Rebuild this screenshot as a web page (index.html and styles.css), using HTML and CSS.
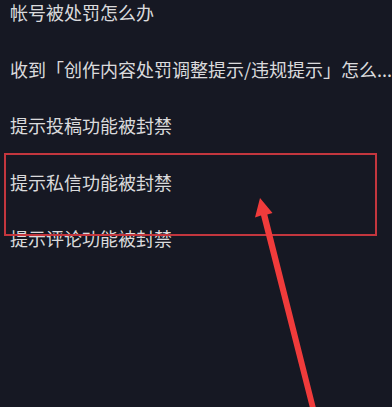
FILE: index.html
```html
<!DOCTYPE html>
<html lang="zh-CN">
<head>
<meta charset="utf-8">
<title>帐号被处罚</title>
<link rel="stylesheet" href="styles.css">
</head>
<body>
<ul class="list">
  <li class="item">帐号被处罚怎么办</li>
  <li class="item">收到「创作内容处罚调整提示/违规提示」怎么...</li>
  <li class="item">提示投稿功能被封禁</li>
  <li class="item">提示私信功能被封禁</li>
  <li class="item">提示评论功能被封禁</li>
</ul>
<div class="highlight"></div>
<svg class="arrow" width="392" height="407" viewBox="0 0 392 407" xmlns="http://www.w3.org/2000/svg">
  <polygon points="260,198 272.5,213 267.3,214.5 319,420 313,420 261,215.5 255,217.5" fill="#f03b3b"/>
</svg>
</body>
</html>
```

FILE: styles.css
```css
html, body {
  margin: 0;
  padding: 0;
}
body {
  width: 392px;
  height: 407px;
  overflow: hidden;
  background: #161823;
  position: relative;
  font-family: "Noto Sans CJK SC", "Noto Sans", sans-serif;
}
.list {
  list-style: none;
  margin: -16px 0 0 0;
  padding: 0;
}
.item {
  height: 56.5px;
  display: flex;
  align-items: center;
  padding-left: 10px;
  font-size: 18px;
  line-height: 1;
  color: rgba(255, 255, 255, 0.86);
  white-space: nowrap;
}
.highlight {
  position: absolute;
  left: 4px;
  top: 153px;
  width: 369px;
  height: 79px;
  border: 2px solid #c3363e;
}
.arrow {
  position: absolute;
  left: 0;
  top: 0;
}
```
